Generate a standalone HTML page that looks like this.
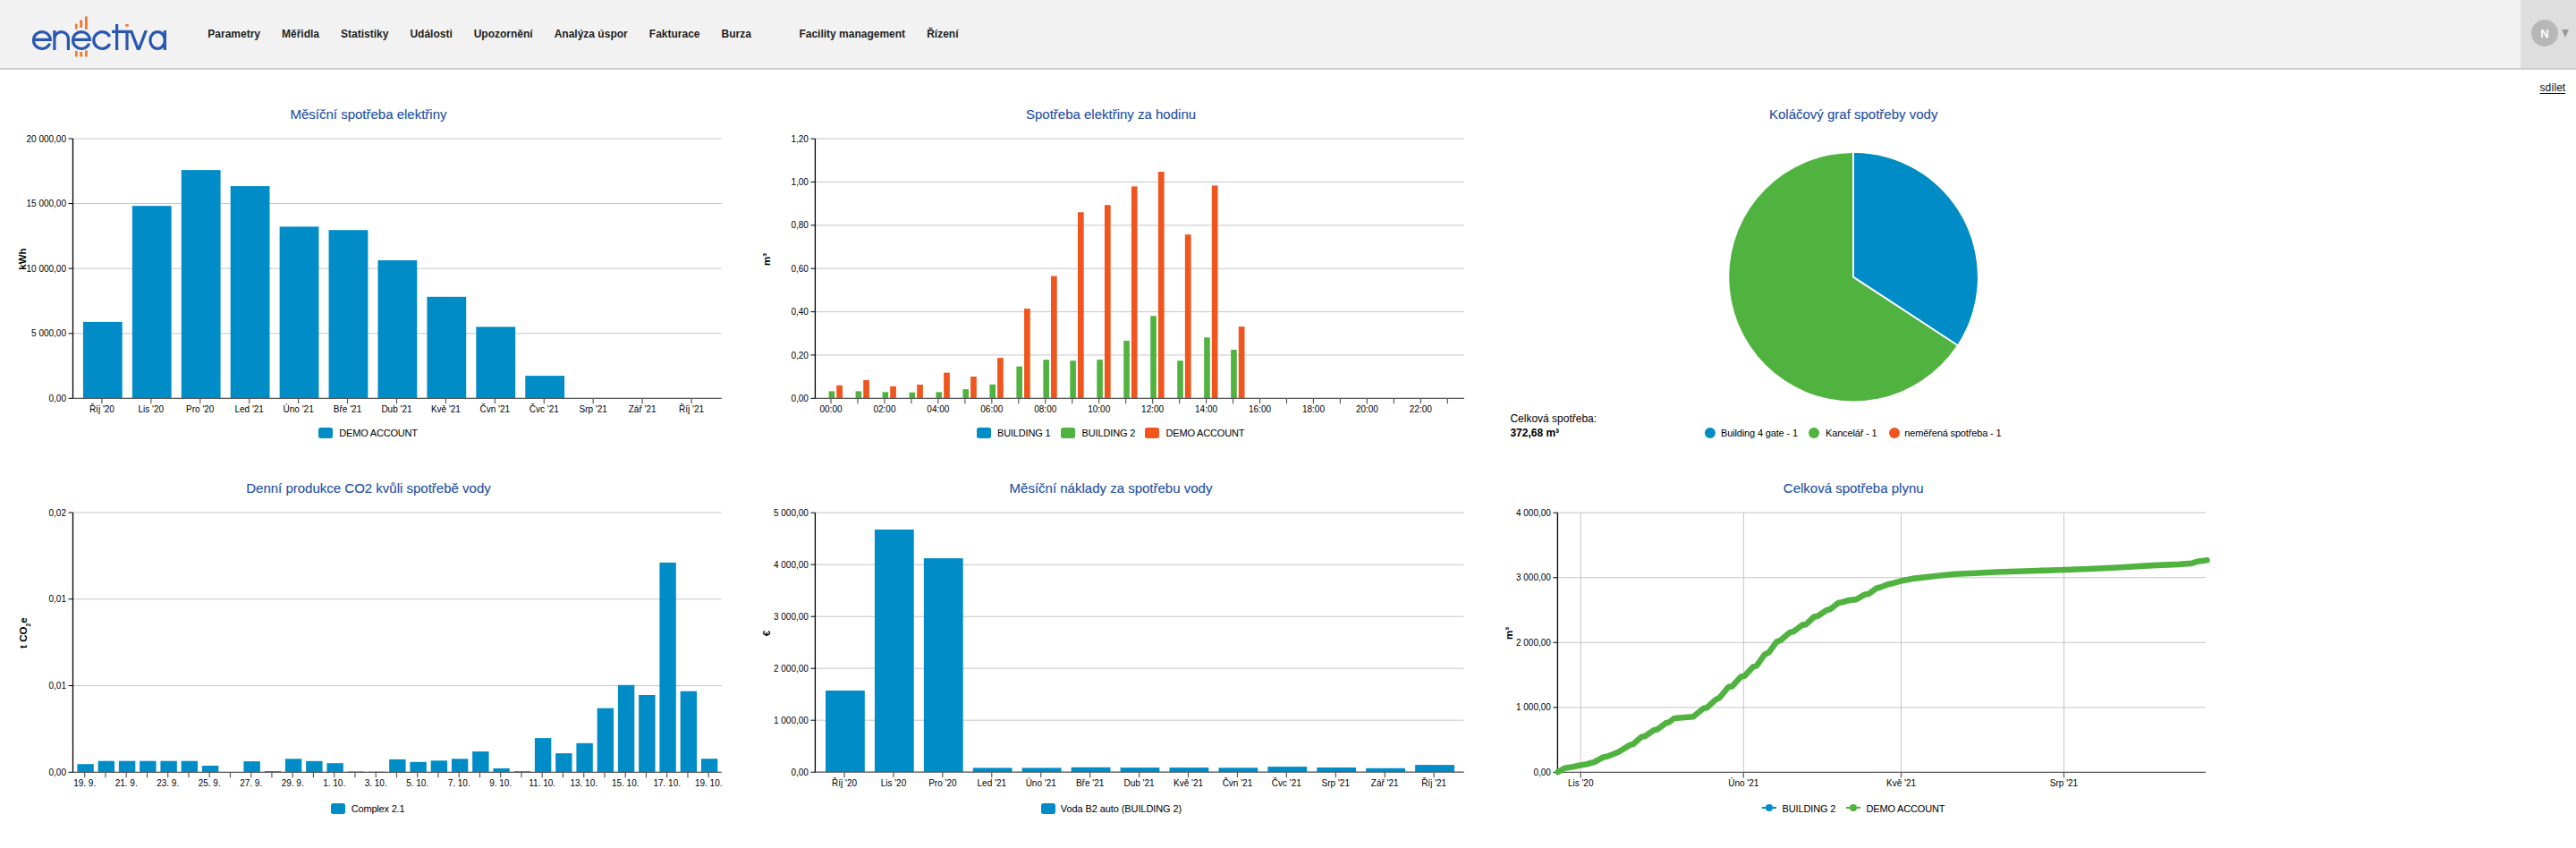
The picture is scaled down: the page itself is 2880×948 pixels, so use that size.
<!DOCTYPE html>
<html><head><meta charset="utf-8"><title>Enectiva</title>
<style>
html,body{margin:0;padding:0;background:#fff;width:2880px;height:948px;overflow:hidden;font-family:"Liberation Sans", sans-serif;}
#hdr{position:absolute;left:0;top:0;width:2880px;height:76px;background:#f2f2f2;border-bottom:2px solid #cecece;}
#usr{position:absolute;left:2818px;top:0;width:62px;height:76px;background:#dedede;}
.nav{position:absolute;top:31px;font-size:12px;font-weight:bold;color:#1e1e1e;white-space:nowrap;line-height:14px;}
#av{position:absolute;left:2830px;top:22px;width:30px;height:30px;border-radius:50%;background:#b7b7b7;color:#fff;font-weight:bold;font-size:13px;line-height:32px;text-align:center;}
#tri{position:absolute;left:2863.5px;top:33px;width:0;height:0;border-left:4.2px solid transparent;border-right:4.2px solid transparent;border-top:9px solid #9a9a9a;}
#share{position:absolute;left:2839.5px;top:91px;font-size:12px;color:#111;text-decoration:underline;text-underline-offset:2px;text-decoration-thickness:1.2px;line-height:14px;}
#charts{position:absolute;left:0;top:0;}
</style></head><body>
<div id="hdr"><svg width="200" height="76" viewBox="0 0 200 76" style="position:absolute;left:0;top:0">
<g fill="none" stroke="#2a58b0" stroke-width="3.2">
<path d="M37.5,44.4 H56.3 A9.4,9.4 0 1 0 55.6,48.6"/>
<path d="M60.9,56 V34 M60.9,56 V43.35 A7.75,7.75 0 0 1 76.4,43.35 V56"/>
<path d="M81.55,44.4 H100.35 A9.4,9.4 0 1 0 99.65,48.6"/>
<path d="M122.7,41 A9.4,9.4 0 1 0 122.7,49"/>
<path d="M130.6,27 V56 M125.1,35.45 H147.7"/>
<path d="M142,35.4 V56"/>
<path d="M176.1,35.6 A8.2,9.4 0 1 0 176.1,54.4 A8.2,9.4 0 1 0 176.1,35.6 M184.4,34 V56"/>
</g>
<polygon fill="#2a58b0" points="144.6,34 148.2,34 154.8,51.8 161.5,34 165.1,34 156.6,56 153,56"/>
<g fill="#f07a32">
<rect x="84" y="26.6" width="2.6" height="6"/>
<rect x="89.2" y="22.4" width="3" height="8.5"/>
<rect x="95" y="18.4" width="2.8" height="14.6"/>
<rect x="84" y="57" width="2.6" height="6.4"/>
<rect x="89.2" y="58" width="3" height="5.4"/>
<rect x="95" y="56.4" width="2.8" height="7"/>
<rect x="140.3" y="27" width="3.4" height="2.8"/>
</g>
</svg><span class="nav" style="left:232.3px">Parametry</span><span class="nav" style="left:315.0px">Měřidla</span><span class="nav" style="left:381.0px">Statistiky</span><span class="nav" style="left:458.4px">Události</span><span class="nav" style="left:529.7px">Upozornění</span><span class="nav" style="left:619.7px">Analýza úspor</span><span class="nav" style="left:725.8px">Fakturace</span><span class="nav" style="left:806.5px">Burza</span><span class="nav" style="left:893.4px">Facility management</span><span class="nav" style="left:1036.2px">Řízení</span><div id="usr"><div></div></div></div>
<div id="av">N</div><div id="tri"></div>
<div id="share">sdílet</div>
<svg id="charts" width="2880" height="948" viewBox="0 0 2880 948" font-family='"Liberation Sans", sans-serif'>
<text x="412" y="133" text-anchor="middle" font-size="15" fill="#1d4fa3" stroke="#1d4fa3" stroke-width="0.12">Měsíční spotřeba elektřiny</text>
<line x1="81.5" y1="445.3" x2="806.7" y2="445.3" stroke="#c6c6c6" stroke-width="1"/>
<line x1="81.5" y1="372.725" x2="806.7" y2="372.725" stroke="#c6c6c6" stroke-width="1"/>
<line x1="81.5" y1="300.15" x2="806.7" y2="300.15" stroke="#c6c6c6" stroke-width="1"/>
<line x1="81.5" y1="227.575" x2="806.7" y2="227.575" stroke="#c6c6c6" stroke-width="1"/>
<line x1="81.5" y1="155.0" x2="806.7" y2="155.0" stroke="#c6c6c6" stroke-width="1"/>
<line x1="76.5" y1="445.3" x2="81.5" y2="445.3" stroke="#000" stroke-width="1"/>
<text x="74.0" y="448.90000000000003" text-anchor="end" font-size="10" fill="#000">0,00</text>
<line x1="76.5" y1="372.725" x2="81.5" y2="372.725" stroke="#000" stroke-width="1"/>
<text x="74.0" y="376.32500000000005" text-anchor="end" font-size="10" fill="#000">5 000,00</text>
<line x1="76.5" y1="300.15" x2="81.5" y2="300.15" stroke="#000" stroke-width="1"/>
<text x="74.0" y="303.75" text-anchor="end" font-size="10" fill="#000">10 000,00</text>
<line x1="76.5" y1="227.575" x2="81.5" y2="227.575" stroke="#000" stroke-width="1"/>
<text x="74.0" y="231.17499999999998" text-anchor="end" font-size="10" fill="#000">15 000,00</text>
<line x1="76.5" y1="155.0" x2="81.5" y2="155.0" stroke="#000" stroke-width="1"/>
<text x="74.0" y="158.6" text-anchor="end" font-size="10" fill="#000">20 000,00</text>
<line x1="81.5" y1="155.0" x2="81.5" y2="445.8" stroke="#000" stroke-width="1.3"/>
<rect x="92.90" y="359.90" width="43.8" height="85.40" fill="#008cc7"/>
<rect x="147.83" y="230.20" width="43.8" height="215.10" fill="#008cc7"/>
<rect x="202.76" y="190.10" width="43.8" height="255.20" fill="#008cc7"/>
<rect x="257.69" y="208.10" width="43.8" height="237.20" fill="#008cc7"/>
<rect x="312.62" y="253.40" width="43.8" height="191.90" fill="#008cc7"/>
<rect x="367.55" y="257.20" width="43.8" height="188.10" fill="#008cc7"/>
<rect x="422.48" y="291.00" width="43.8" height="154.30" fill="#008cc7"/>
<rect x="477.41" y="331.80" width="43.8" height="113.50" fill="#008cc7"/>
<rect x="532.34" y="365.40" width="43.8" height="79.90" fill="#008cc7"/>
<rect x="587.27" y="420.10" width="43.8" height="25.20" fill="#008cc7"/>
<line x1="81.5" y1="445.3" x2="806.7" y2="445.3" stroke="#5a5a5a" stroke-width="1.2"/>
<line x1="113.9" y1="445.3" x2="113.9" y2="451.3" stroke="#5a5a5a" stroke-width="1.2"/>
<line x1="168.83" y1="445.3" x2="168.83" y2="451.3" stroke="#5a5a5a" stroke-width="1.2"/>
<line x1="223.76" y1="445.3" x2="223.76" y2="451.3" stroke="#5a5a5a" stroke-width="1.2"/>
<line x1="278.69" y1="445.3" x2="278.69" y2="451.3" stroke="#5a5a5a" stroke-width="1.2"/>
<line x1="333.62" y1="445.3" x2="333.62" y2="451.3" stroke="#5a5a5a" stroke-width="1.2"/>
<line x1="388.54999999999995" y1="445.3" x2="388.54999999999995" y2="451.3" stroke="#5a5a5a" stroke-width="1.2"/>
<line x1="443.48" y1="445.3" x2="443.48" y2="451.3" stroke="#5a5a5a" stroke-width="1.2"/>
<line x1="498.40999999999997" y1="445.3" x2="498.40999999999997" y2="451.3" stroke="#5a5a5a" stroke-width="1.2"/>
<line x1="553.34" y1="445.3" x2="553.34" y2="451.3" stroke="#5a5a5a" stroke-width="1.2"/>
<line x1="608.27" y1="445.3" x2="608.27" y2="451.3" stroke="#5a5a5a" stroke-width="1.2"/>
<line x1="663.1999999999999" y1="445.3" x2="663.1999999999999" y2="451.3" stroke="#5a5a5a" stroke-width="1.2"/>
<line x1="718.13" y1="445.3" x2="718.13" y2="451.3" stroke="#5a5a5a" stroke-width="1.2"/>
<line x1="773.06" y1="445.3" x2="773.06" y2="451.3" stroke="#5a5a5a" stroke-width="1.2"/>
<text x="113.9" y="461" text-anchor="middle" font-size="10" fill="#000">Říj '20</text>
<text x="168.83" y="461" text-anchor="middle" font-size="10" fill="#000">Lis '20</text>
<text x="223.76" y="461" text-anchor="middle" font-size="10" fill="#000">Pro '20</text>
<text x="278.69" y="461" text-anchor="middle" font-size="10" fill="#000">Led '21</text>
<text x="333.62" y="461" text-anchor="middle" font-size="10" fill="#000">Úno '21</text>
<text x="388.54999999999995" y="461" text-anchor="middle" font-size="10" fill="#000">Bře '21</text>
<text x="443.48" y="461" text-anchor="middle" font-size="10" fill="#000">Dub '21</text>
<text x="498.40999999999997" y="461" text-anchor="middle" font-size="10" fill="#000">Kvě '21</text>
<text x="553.34" y="461" text-anchor="middle" font-size="10" fill="#000">Čvn '21</text>
<text x="608.27" y="461" text-anchor="middle" font-size="10" fill="#000">Čvc '21</text>
<text x="663.1999999999999" y="461" text-anchor="middle" font-size="10" fill="#000">Srp '21</text>
<text x="718.13" y="461" text-anchor="middle" font-size="10" fill="#000">Zář '21</text>
<text x="773.06" y="461" text-anchor="middle" font-size="10" fill="#000">Říj '21</text>
<text transform="translate(29,289.6) rotate(-90)" text-anchor="middle" font-size="11.5" font-weight="bold" fill="#000">kWh</text>
<rect x="356" y="478" width="16" height="12" rx="2.5" fill="#008cc7"/>
<text x="379.3" y="488" font-size="11" textLength="87.8" lengthAdjust="spacing" fill="#000">DEMO ACCOUNT</text>
<text x="1242" y="133" text-anchor="middle" font-size="15" fill="#1d4fa3" stroke="#1d4fa3" stroke-width="0.12">Spotřeba elektřiny za hodinu</text>
<line x1="911.4" y1="445.3" x2="1637.0" y2="445.3" stroke="#c6c6c6" stroke-width="1"/>
<line x1="911.4" y1="396.93333333333334" x2="1637.0" y2="396.93333333333334" stroke="#c6c6c6" stroke-width="1"/>
<line x1="911.4" y1="348.56666666666666" x2="1637.0" y2="348.56666666666666" stroke="#c6c6c6" stroke-width="1"/>
<line x1="911.4" y1="300.2" x2="1637.0" y2="300.2" stroke="#c6c6c6" stroke-width="1"/>
<line x1="911.4" y1="251.8333333333333" x2="1637.0" y2="251.8333333333333" stroke="#c6c6c6" stroke-width="1"/>
<line x1="911.4" y1="203.46666666666664" x2="1637.0" y2="203.46666666666664" stroke="#c6c6c6" stroke-width="1"/>
<line x1="911.4" y1="155.09999999999997" x2="1637.0" y2="155.09999999999997" stroke="#c6c6c6" stroke-width="1"/>
<line x1="906.4" y1="445.3" x2="911.4" y2="445.3" stroke="#000" stroke-width="1"/>
<text x="903.9" y="448.90000000000003" text-anchor="end" font-size="10" fill="#000">0,00</text>
<line x1="906.4" y1="396.93333333333334" x2="911.4" y2="396.93333333333334" stroke="#000" stroke-width="1"/>
<text x="903.9" y="400.53333333333336" text-anchor="end" font-size="10" fill="#000">0,20</text>
<line x1="906.4" y1="348.56666666666666" x2="911.4" y2="348.56666666666666" stroke="#000" stroke-width="1"/>
<text x="903.9" y="352.1666666666667" text-anchor="end" font-size="10" fill="#000">0,40</text>
<line x1="906.4" y1="300.2" x2="911.4" y2="300.2" stroke="#000" stroke-width="1"/>
<text x="903.9" y="303.8" text-anchor="end" font-size="10" fill="#000">0,60</text>
<line x1="906.4" y1="251.8333333333333" x2="911.4" y2="251.8333333333333" stroke="#000" stroke-width="1"/>
<text x="903.9" y="255.43333333333328" text-anchor="end" font-size="10" fill="#000">0,80</text>
<line x1="906.4" y1="203.46666666666664" x2="911.4" y2="203.46666666666664" stroke="#000" stroke-width="1"/>
<text x="903.9" y="207.06666666666663" text-anchor="end" font-size="10" fill="#000">1,00</text>
<line x1="906.4" y1="155.09999999999997" x2="911.4" y2="155.09999999999997" stroke="#000" stroke-width="1"/>
<text x="903.9" y="158.69999999999996" text-anchor="end" font-size="10" fill="#000">1,20</text>
<line x1="911.4" y1="155.1" x2="911.4" y2="445.8" stroke="#000" stroke-width="1.3"/>
<rect x="926.60" y="437.40" width="6.6" height="7.90" fill="#50b33f"/>
<rect x="956.57" y="437.40" width="6.6" height="7.90" fill="#50b33f"/>
<rect x="986.54" y="438.30" width="6.6" height="7.00" fill="#50b33f"/>
<rect x="1016.51" y="438.70" width="6.6" height="6.60" fill="#50b33f"/>
<rect x="1046.48" y="438.30" width="6.6" height="7.00" fill="#50b33f"/>
<rect x="1076.45" y="435.10" width="6.6" height="10.20" fill="#50b33f"/>
<rect x="1106.42" y="429.80" width="6.6" height="15.50" fill="#50b33f"/>
<rect x="1136.39" y="409.60" width="6.6" height="35.70" fill="#50b33f"/>
<rect x="1166.36" y="402.10" width="6.6" height="43.20" fill="#50b33f"/>
<rect x="1196.33" y="403.20" width="6.6" height="42.10" fill="#50b33f"/>
<rect x="1226.30" y="402.10" width="6.6" height="43.20" fill="#50b33f"/>
<rect x="1256.27" y="380.90" width="6.6" height="64.40" fill="#50b33f"/>
<rect x="1286.24" y="353.20" width="6.6" height="92.10" fill="#50b33f"/>
<rect x="1316.21" y="403.20" width="6.6" height="42.10" fill="#50b33f"/>
<rect x="1346.18" y="377.20" width="6.6" height="68.10" fill="#50b33f"/>
<rect x="1376.15" y="391.00" width="6.6" height="54.30" fill="#50b33f"/>
<rect x="935.25" y="430.80" width="6.7" height="14.50" fill="#f0551e"/>
<rect x="965.22" y="424.90" width="6.7" height="20.40" fill="#f0551e"/>
<rect x="995.19" y="431.90" width="6.7" height="13.40" fill="#f0551e"/>
<rect x="1025.16" y="430.00" width="6.7" height="15.30" fill="#f0551e"/>
<rect x="1055.13" y="416.60" width="6.7" height="28.70" fill="#f0551e"/>
<rect x="1085.10" y="421.00" width="6.7" height="24.30" fill="#f0551e"/>
<rect x="1115.07" y="400.10" width="6.7" height="45.20" fill="#f0551e"/>
<rect x="1145.04" y="345.00" width="6.7" height="100.30" fill="#f0551e"/>
<rect x="1175.01" y="308.60" width="6.7" height="136.70" fill="#f0551e"/>
<rect x="1204.98" y="237.30" width="6.7" height="208.00" fill="#f0551e"/>
<rect x="1234.95" y="229.20" width="6.7" height="216.10" fill="#f0551e"/>
<rect x="1264.92" y="208.40" width="6.7" height="236.90" fill="#f0551e"/>
<rect x="1294.89" y="192.00" width="6.7" height="253.30" fill="#f0551e"/>
<rect x="1324.86" y="262.20" width="6.7" height="183.10" fill="#f0551e"/>
<rect x="1354.83" y="207.40" width="6.7" height="237.90" fill="#f0551e"/>
<rect x="1384.80" y="365.10" width="6.7" height="80.20" fill="#f0551e"/>
<line x1="911.4" y1="445.3" x2="1637.0" y2="445.3" stroke="#5a5a5a" stroke-width="1.2"/>
<line x1="929.0" y1="445.3" x2="929.0" y2="451.3" stroke="#5a5a5a" stroke-width="1.2"/>
<line x1="958.97" y1="445.3" x2="958.97" y2="451.3" stroke="#5a5a5a" stroke-width="1.2"/>
<line x1="988.94" y1="445.3" x2="988.94" y2="451.3" stroke="#5a5a5a" stroke-width="1.2"/>
<line x1="1018.91" y1="445.3" x2="1018.91" y2="451.3" stroke="#5a5a5a" stroke-width="1.2"/>
<line x1="1048.88" y1="445.3" x2="1048.88" y2="451.3" stroke="#5a5a5a" stroke-width="1.2"/>
<line x1="1078.85" y1="445.3" x2="1078.85" y2="451.3" stroke="#5a5a5a" stroke-width="1.2"/>
<line x1="1108.82" y1="445.3" x2="1108.82" y2="451.3" stroke="#5a5a5a" stroke-width="1.2"/>
<line x1="1138.79" y1="445.3" x2="1138.79" y2="451.3" stroke="#5a5a5a" stroke-width="1.2"/>
<line x1="1168.76" y1="445.3" x2="1168.76" y2="451.3" stroke="#5a5a5a" stroke-width="1.2"/>
<line x1="1198.73" y1="445.3" x2="1198.73" y2="451.3" stroke="#5a5a5a" stroke-width="1.2"/>
<line x1="1228.7" y1="445.3" x2="1228.7" y2="451.3" stroke="#5a5a5a" stroke-width="1.2"/>
<line x1="1258.67" y1="445.3" x2="1258.67" y2="451.3" stroke="#5a5a5a" stroke-width="1.2"/>
<line x1="1288.6399999999999" y1="445.3" x2="1288.6399999999999" y2="451.3" stroke="#5a5a5a" stroke-width="1.2"/>
<line x1="1318.6100000000001" y1="445.3" x2="1318.6100000000001" y2="451.3" stroke="#5a5a5a" stroke-width="1.2"/>
<line x1="1348.58" y1="445.3" x2="1348.58" y2="451.3" stroke="#5a5a5a" stroke-width="1.2"/>
<line x1="1378.55" y1="445.3" x2="1378.55" y2="451.3" stroke="#5a5a5a" stroke-width="1.2"/>
<line x1="1408.52" y1="445.3" x2="1408.52" y2="451.3" stroke="#5a5a5a" stroke-width="1.2"/>
<line x1="1438.49" y1="445.3" x2="1438.49" y2="451.3" stroke="#5a5a5a" stroke-width="1.2"/>
<line x1="1468.46" y1="445.3" x2="1468.46" y2="451.3" stroke="#5a5a5a" stroke-width="1.2"/>
<line x1="1498.4299999999998" y1="445.3" x2="1498.4299999999998" y2="451.3" stroke="#5a5a5a" stroke-width="1.2"/>
<line x1="1528.4" y1="445.3" x2="1528.4" y2="451.3" stroke="#5a5a5a" stroke-width="1.2"/>
<line x1="1558.37" y1="445.3" x2="1558.37" y2="451.3" stroke="#5a5a5a" stroke-width="1.2"/>
<line x1="1588.34" y1="445.3" x2="1588.34" y2="451.3" stroke="#5a5a5a" stroke-width="1.2"/>
<line x1="1618.31" y1="445.3" x2="1618.31" y2="451.3" stroke="#5a5a5a" stroke-width="1.2"/>
<text x="929.0" y="461" text-anchor="middle" font-size="10" fill="#000">00:00</text>
<text x="988.94" y="461" text-anchor="middle" font-size="10" fill="#000">02:00</text>
<text x="1048.88" y="461" text-anchor="middle" font-size="10" fill="#000">04:00</text>
<text x="1108.82" y="461" text-anchor="middle" font-size="10" fill="#000">06:00</text>
<text x="1168.76" y="461" text-anchor="middle" font-size="10" fill="#000">08:00</text>
<text x="1228.7" y="461" text-anchor="middle" font-size="10" fill="#000">10:00</text>
<text x="1288.6399999999999" y="461" text-anchor="middle" font-size="10" fill="#000">12:00</text>
<text x="1348.58" y="461" text-anchor="middle" font-size="10" fill="#000">14:00</text>
<text x="1408.52" y="461" text-anchor="middle" font-size="10" fill="#000">16:00</text>
<text x="1468.46" y="461" text-anchor="middle" font-size="10" fill="#000">18:00</text>
<text x="1528.4" y="461" text-anchor="middle" font-size="10" fill="#000">20:00</text>
<text x="1588.34" y="461" text-anchor="middle" font-size="10" fill="#000">22:00</text>
<text transform="translate(860.8,290) rotate(-90)" text-anchor="middle" font-size="11.5" font-weight="bold" fill="#000">m³</text>
<rect x="1092" y="478" width="16" height="12" rx="2.5" fill="#008cc7"/>
<text x="1115" y="488" font-size="11" textLength="59.6" lengthAdjust="spacing" fill="#000">BUILDING 1</text>
<rect x="1186" y="478" width="16" height="12" rx="2.5" fill="#50b33f"/>
<text x="1209.6" y="488" font-size="11" textLength="59.8" lengthAdjust="spacing" fill="#000">BUILDING 2</text>
<rect x="1280" y="478" width="16" height="12" rx="2.5" fill="#f0551e"/>
<text x="1303.6" y="488" font-size="11" textLength="87.8" lengthAdjust="spacing" fill="#000">DEMO ACCOUNT</text>
<text x="2072.2" y="133" text-anchor="middle" font-size="15" fill="#1d4fa3" stroke="#1d4fa3" stroke-width="0.12">Koláčový graf spotřeby vody</text>
<circle cx="2072.0" cy="309.7" r="138.8" fill="#50b33f"/>
<path d="M2072.0,309.7 L2072.0,170.89999999999998 A138.8,138.8 0 0 1 2188.14,385.70 Z" fill="#008cc7"/>
<path d="M2072.0,169.89999999999998 L2072.0,309.7 L2188.98,386.25" fill="none" stroke="#fff" stroke-width="2"/>
<text x="1688.4" y="472.1" font-size="12" fill="#000">Celková spotřeba:</text>
<text x="1688.4" y="487.5" font-size="12" font-weight="bold" fill="#000">372,68 m³</text>
<circle cx="1911.9" cy="484" r="6" fill="#008cc7"/>
<text x="1924.1" y="488" font-size="11" textLength="85.9" lengthAdjust="spacing" fill="#000">Building 4 gate - 1</text>
<circle cx="2028.0" cy="484" r="6" fill="#50b33f"/>
<text x="2041.0" y="488" font-size="11" textLength="57.6" lengthAdjust="spacing" fill="#000">Kancelář - 1</text>
<circle cx="2118.0" cy="484" r="6" fill="#f0551e"/>
<text x="2129.3" y="488" font-size="11" textLength="108.3" lengthAdjust="spacing" fill="#000">neměřená spotřeba - 1</text>
<text x="412" y="551" text-anchor="middle" font-size="15" fill="#1d4fa3" stroke="#1d4fa3" stroke-width="0.12">Denní produkce CO2 kvůli spotřebě vody</text>
<line x1="81.5" y1="863.3" x2="806.7" y2="863.3" stroke="#c6c6c6" stroke-width="1"/>
<line x1="81.5" y1="766.5333333333333" x2="806.7" y2="766.5333333333333" stroke="#c6c6c6" stroke-width="1"/>
<line x1="81.5" y1="669.7666666666667" x2="806.7" y2="669.7666666666667" stroke="#c6c6c6" stroke-width="1"/>
<line x1="81.5" y1="573.0" x2="806.7" y2="573.0" stroke="#c6c6c6" stroke-width="1"/>
<line x1="76.5" y1="863.3" x2="81.5" y2="863.3" stroke="#000" stroke-width="1"/>
<text x="74.0" y="866.9" text-anchor="end" font-size="10" fill="#000">0,00</text>
<line x1="76.5" y1="766.5333333333333" x2="81.5" y2="766.5333333333333" stroke="#000" stroke-width="1"/>
<text x="74.0" y="770.1333333333333" text-anchor="end" font-size="10" fill="#000">0,01</text>
<line x1="76.5" y1="669.7666666666667" x2="81.5" y2="669.7666666666667" stroke="#000" stroke-width="1"/>
<text x="74.0" y="673.3666666666667" text-anchor="end" font-size="10" fill="#000">0,01</text>
<line x1="76.5" y1="573.0" x2="81.5" y2="573.0" stroke="#000" stroke-width="1"/>
<text x="74.0" y="576.6" text-anchor="end" font-size="10" fill="#000">0,02</text>
<line x1="81.5" y1="573.0" x2="81.5" y2="863.8" stroke="#000" stroke-width="1.3"/>
<rect x="86.40" y="854.20" width="18.4" height="9.10" fill="#008cc7"/>
<rect x="109.65" y="850.70" width="18.4" height="12.60" fill="#008cc7"/>
<rect x="132.90" y="850.70" width="18.4" height="12.60" fill="#008cc7"/>
<rect x="156.15" y="850.70" width="18.4" height="12.60" fill="#008cc7"/>
<rect x="179.40" y="850.70" width="18.4" height="12.60" fill="#008cc7"/>
<rect x="202.65" y="850.70" width="18.4" height="12.60" fill="#008cc7"/>
<rect x="225.90" y="856.00" width="18.4" height="7.30" fill="#008cc7"/>
<rect x="272.40" y="851.10" width="18.4" height="12.20" fill="#008cc7"/>
<rect x="295.65" y="862.10" width="18.4" height="1.20" fill="#008cc7"/>
<rect x="318.90" y="848.30" width="18.4" height="15.00" fill="#008cc7"/>
<rect x="342.15" y="850.80" width="18.4" height="12.50" fill="#008cc7"/>
<rect x="365.40" y="853.20" width="18.4" height="10.10" fill="#008cc7"/>
<rect x="388.65" y="862.50" width="18.4" height="0.80" fill="#008cc7"/>
<rect x="411.90" y="862.70" width="18.4" height="0.60" fill="#008cc7"/>
<rect x="435.15" y="848.90" width="18.4" height="14.40" fill="#008cc7"/>
<rect x="458.40" y="851.80" width="18.4" height="11.50" fill="#008cc7"/>
<rect x="481.65" y="850.30" width="18.4" height="13.00" fill="#008cc7"/>
<rect x="504.90" y="848.30" width="18.4" height="15.00" fill="#008cc7"/>
<rect x="528.15" y="840.10" width="18.4" height="23.20" fill="#008cc7"/>
<rect x="551.40" y="858.90" width="18.4" height="4.40" fill="#008cc7"/>
<rect x="574.65" y="862.20" width="18.4" height="1.10" fill="#008cc7"/>
<rect x="597.90" y="825.10" width="18.4" height="38.20" fill="#008cc7"/>
<rect x="621.15" y="842.10" width="18.4" height="21.20" fill="#008cc7"/>
<rect x="644.40" y="830.80" width="18.4" height="32.50" fill="#008cc7"/>
<rect x="667.65" y="791.70" width="18.4" height="71.60" fill="#008cc7"/>
<rect x="690.90" y="765.80" width="18.4" height="97.50" fill="#008cc7"/>
<rect x="714.15" y="777.00" width="18.4" height="86.30" fill="#008cc7"/>
<rect x="737.40" y="628.90" width="18.4" height="234.40" fill="#008cc7"/>
<rect x="760.65" y="772.70" width="18.4" height="90.60" fill="#008cc7"/>
<rect x="783.90" y="848.20" width="18.4" height="15.10" fill="#008cc7"/>
<line x1="81.5" y1="863.3" x2="806.7" y2="863.3" stroke="#5a5a5a" stroke-width="1.2"/>
<line x1="94.7" y1="863.3" x2="94.7" y2="869.3" stroke="#5a5a5a" stroke-width="1.2"/>
<line x1="117.95" y1="863.3" x2="117.95" y2="869.3" stroke="#5a5a5a" stroke-width="1.2"/>
<line x1="141.2" y1="863.3" x2="141.2" y2="869.3" stroke="#5a5a5a" stroke-width="1.2"/>
<line x1="164.45" y1="863.3" x2="164.45" y2="869.3" stroke="#5a5a5a" stroke-width="1.2"/>
<line x1="187.7" y1="863.3" x2="187.7" y2="869.3" stroke="#5a5a5a" stroke-width="1.2"/>
<line x1="210.95" y1="863.3" x2="210.95" y2="869.3" stroke="#5a5a5a" stroke-width="1.2"/>
<line x1="234.2" y1="863.3" x2="234.2" y2="869.3" stroke="#5a5a5a" stroke-width="1.2"/>
<line x1="257.45" y1="863.3" x2="257.45" y2="869.3" stroke="#5a5a5a" stroke-width="1.2"/>
<line x1="280.7" y1="863.3" x2="280.7" y2="869.3" stroke="#5a5a5a" stroke-width="1.2"/>
<line x1="303.95" y1="863.3" x2="303.95" y2="869.3" stroke="#5a5a5a" stroke-width="1.2"/>
<line x1="327.2" y1="863.3" x2="327.2" y2="869.3" stroke="#5a5a5a" stroke-width="1.2"/>
<line x1="350.45" y1="863.3" x2="350.45" y2="869.3" stroke="#5a5a5a" stroke-width="1.2"/>
<line x1="373.7" y1="863.3" x2="373.7" y2="869.3" stroke="#5a5a5a" stroke-width="1.2"/>
<line x1="396.95" y1="863.3" x2="396.95" y2="869.3" stroke="#5a5a5a" stroke-width="1.2"/>
<line x1="420.2" y1="863.3" x2="420.2" y2="869.3" stroke="#5a5a5a" stroke-width="1.2"/>
<line x1="443.45" y1="863.3" x2="443.45" y2="869.3" stroke="#5a5a5a" stroke-width="1.2"/>
<line x1="466.7" y1="863.3" x2="466.7" y2="869.3" stroke="#5a5a5a" stroke-width="1.2"/>
<line x1="489.95" y1="863.3" x2="489.95" y2="869.3" stroke="#5a5a5a" stroke-width="1.2"/>
<line x1="513.2" y1="863.3" x2="513.2" y2="869.3" stroke="#5a5a5a" stroke-width="1.2"/>
<line x1="536.45" y1="863.3" x2="536.45" y2="869.3" stroke="#5a5a5a" stroke-width="1.2"/>
<line x1="559.7" y1="863.3" x2="559.7" y2="869.3" stroke="#5a5a5a" stroke-width="1.2"/>
<line x1="582.95" y1="863.3" x2="582.95" y2="869.3" stroke="#5a5a5a" stroke-width="1.2"/>
<line x1="606.2" y1="863.3" x2="606.2" y2="869.3" stroke="#5a5a5a" stroke-width="1.2"/>
<line x1="629.45" y1="863.3" x2="629.45" y2="869.3" stroke="#5a5a5a" stroke-width="1.2"/>
<line x1="652.7" y1="863.3" x2="652.7" y2="869.3" stroke="#5a5a5a" stroke-width="1.2"/>
<line x1="675.95" y1="863.3" x2="675.95" y2="869.3" stroke="#5a5a5a" stroke-width="1.2"/>
<line x1="699.2" y1="863.3" x2="699.2" y2="869.3" stroke="#5a5a5a" stroke-width="1.2"/>
<line x1="722.45" y1="863.3" x2="722.45" y2="869.3" stroke="#5a5a5a" stroke-width="1.2"/>
<line x1="745.7" y1="863.3" x2="745.7" y2="869.3" stroke="#5a5a5a" stroke-width="1.2"/>
<line x1="768.95" y1="863.3" x2="768.95" y2="869.3" stroke="#5a5a5a" stroke-width="1.2"/>
<line x1="792.2" y1="863.3" x2="792.2" y2="869.3" stroke="#5a5a5a" stroke-width="1.2"/>
<text x="94.7" y="878.7" text-anchor="middle" font-size="10" fill="#000">19. 9.</text>
<text x="141.2" y="878.7" text-anchor="middle" font-size="10" fill="#000">21. 9.</text>
<text x="187.7" y="878.7" text-anchor="middle" font-size="10" fill="#000">23. 9.</text>
<text x="234.2" y="878.7" text-anchor="middle" font-size="10" fill="#000">25. 9.</text>
<text x="280.7" y="878.7" text-anchor="middle" font-size="10" fill="#000">27. 9.</text>
<text x="327.2" y="878.7" text-anchor="middle" font-size="10" fill="#000">29. 9.</text>
<text x="373.7" y="878.7" text-anchor="middle" font-size="10" fill="#000">1. 10.</text>
<text x="420.2" y="878.7" text-anchor="middle" font-size="10" fill="#000">3. 10.</text>
<text x="466.7" y="878.7" text-anchor="middle" font-size="10" fill="#000">5. 10.</text>
<text x="513.2" y="878.7" text-anchor="middle" font-size="10" fill="#000">7. 10.</text>
<text x="559.7" y="878.7" text-anchor="middle" font-size="10" fill="#000">9. 10.</text>
<text x="606.2" y="878.7" text-anchor="middle" font-size="10" fill="#000">11. 10.</text>
<text x="652.7" y="878.7" text-anchor="middle" font-size="10" fill="#000">13. 10.</text>
<text x="699.2" y="878.7" text-anchor="middle" font-size="10" fill="#000">15. 10.</text>
<text x="745.7" y="878.7" text-anchor="middle" font-size="10" fill="#000">17. 10.</text>
<text x="792.2" y="878.7" text-anchor="middle" font-size="10" fill="#000">19. 10.</text>
<text transform="translate(29.6,707.6) rotate(-90)" text-anchor="middle" font-size="11.5" font-weight="bold" fill="#000">t CO<tspan font-size="7" dy="4">2</tspan><tspan dy="-4">e</tspan></text>
<rect x="370" y="898" width="16" height="12" rx="2.5" fill="#008cc7"/>
<text x="392.8" y="908" font-size="11" textLength="59.8" lengthAdjust="spacing" fill="#000">Complex 2.1</text>
<text x="1242" y="551" text-anchor="middle" font-size="15" fill="#1d4fa3" stroke="#1d4fa3" stroke-width="0.12">Měsíční náklady za spotřebu vody</text>
<line x1="911.4" y1="863.2" x2="1636.7" y2="863.2" stroke="#c6c6c6" stroke-width="1"/>
<line x1="911.4" y1="805.2" x2="1636.7" y2="805.2" stroke="#c6c6c6" stroke-width="1"/>
<line x1="911.4" y1="747.2" x2="1636.7" y2="747.2" stroke="#c6c6c6" stroke-width="1"/>
<line x1="911.4" y1="689.2" x2="1636.7" y2="689.2" stroke="#c6c6c6" stroke-width="1"/>
<line x1="911.4" y1="631.2" x2="1636.7" y2="631.2" stroke="#c6c6c6" stroke-width="1"/>
<line x1="911.4" y1="573.2" x2="1636.7" y2="573.2" stroke="#c6c6c6" stroke-width="1"/>
<line x1="906.4" y1="863.2" x2="911.4" y2="863.2" stroke="#000" stroke-width="1"/>
<text x="903.9" y="866.8000000000001" text-anchor="end" font-size="10" fill="#000">0,00</text>
<line x1="906.4" y1="805.2" x2="911.4" y2="805.2" stroke="#000" stroke-width="1"/>
<text x="903.9" y="808.8000000000001" text-anchor="end" font-size="10" fill="#000">1 000,00</text>
<line x1="906.4" y1="747.2" x2="911.4" y2="747.2" stroke="#000" stroke-width="1"/>
<text x="903.9" y="750.8000000000001" text-anchor="end" font-size="10" fill="#000">2 000,00</text>
<line x1="906.4" y1="689.2" x2="911.4" y2="689.2" stroke="#000" stroke-width="1"/>
<text x="903.9" y="692.8000000000001" text-anchor="end" font-size="10" fill="#000">3 000,00</text>
<line x1="906.4" y1="631.2" x2="911.4" y2="631.2" stroke="#000" stroke-width="1"/>
<text x="903.9" y="634.8000000000001" text-anchor="end" font-size="10" fill="#000">4 000,00</text>
<line x1="906.4" y1="573.2" x2="911.4" y2="573.2" stroke="#000" stroke-width="1"/>
<text x="903.9" y="576.8000000000001" text-anchor="end" font-size="10" fill="#000">5 000,00</text>
<line x1="911.4" y1="573.2" x2="911.4" y2="863.7" stroke="#000" stroke-width="1.3"/>
<rect x="923.00" y="772.00" width="43.8" height="91.20" fill="#008cc7"/>
<rect x="977.93" y="592.00" width="43.8" height="271.20" fill="#008cc7"/>
<rect x="1032.86" y="624.10" width="43.8" height="239.10" fill="#008cc7"/>
<rect x="1087.79" y="858.40" width="43.8" height="4.80" fill="#008cc7"/>
<rect x="1142.72" y="858.40" width="43.8" height="4.80" fill="#008cc7"/>
<rect x="1197.65" y="857.80" width="43.8" height="5.40" fill="#008cc7"/>
<rect x="1252.58" y="858.10" width="43.8" height="5.10" fill="#008cc7"/>
<rect x="1307.51" y="858.10" width="43.8" height="5.10" fill="#008cc7"/>
<rect x="1362.44" y="858.30" width="43.8" height="4.90" fill="#008cc7"/>
<rect x="1417.37" y="857.10" width="43.8" height="6.10" fill="#008cc7"/>
<rect x="1472.30" y="858.00" width="43.8" height="5.20" fill="#008cc7"/>
<rect x="1527.23" y="858.80" width="43.8" height="4.40" fill="#008cc7"/>
<rect x="1582.16" y="855.10" width="43.8" height="8.10" fill="#008cc7"/>
<line x1="911.4" y1="863.2" x2="1636.7" y2="863.2" stroke="#5a5a5a" stroke-width="1.2"/>
<line x1="944.0" y1="863.2" x2="944.0" y2="869.2" stroke="#5a5a5a" stroke-width="1.2"/>
<line x1="998.93" y1="863.2" x2="998.93" y2="869.2" stroke="#5a5a5a" stroke-width="1.2"/>
<line x1="1053.86" y1="863.2" x2="1053.86" y2="869.2" stroke="#5a5a5a" stroke-width="1.2"/>
<line x1="1108.79" y1="863.2" x2="1108.79" y2="869.2" stroke="#5a5a5a" stroke-width="1.2"/>
<line x1="1163.72" y1="863.2" x2="1163.72" y2="869.2" stroke="#5a5a5a" stroke-width="1.2"/>
<line x1="1218.65" y1="863.2" x2="1218.65" y2="869.2" stroke="#5a5a5a" stroke-width="1.2"/>
<line x1="1273.58" y1="863.2" x2="1273.58" y2="869.2" stroke="#5a5a5a" stroke-width="1.2"/>
<line x1="1328.51" y1="863.2" x2="1328.51" y2="869.2" stroke="#5a5a5a" stroke-width="1.2"/>
<line x1="1383.44" y1="863.2" x2="1383.44" y2="869.2" stroke="#5a5a5a" stroke-width="1.2"/>
<line x1="1438.37" y1="863.2" x2="1438.37" y2="869.2" stroke="#5a5a5a" stroke-width="1.2"/>
<line x1="1493.3" y1="863.2" x2="1493.3" y2="869.2" stroke="#5a5a5a" stroke-width="1.2"/>
<line x1="1548.23" y1="863.2" x2="1548.23" y2="869.2" stroke="#5a5a5a" stroke-width="1.2"/>
<line x1="1603.1599999999999" y1="863.2" x2="1603.1599999999999" y2="869.2" stroke="#5a5a5a" stroke-width="1.2"/>
<text x="944.0" y="878.7" text-anchor="middle" font-size="10" fill="#000">Říj '20</text>
<text x="998.93" y="878.7" text-anchor="middle" font-size="10" fill="#000">Lis '20</text>
<text x="1053.86" y="878.7" text-anchor="middle" font-size="10" fill="#000">Pro '20</text>
<text x="1108.79" y="878.7" text-anchor="middle" font-size="10" fill="#000">Led '21</text>
<text x="1163.72" y="878.7" text-anchor="middle" font-size="10" fill="#000">Úno '21</text>
<text x="1218.65" y="878.7" text-anchor="middle" font-size="10" fill="#000">Bře '21</text>
<text x="1273.58" y="878.7" text-anchor="middle" font-size="10" fill="#000">Dub '21</text>
<text x="1328.51" y="878.7" text-anchor="middle" font-size="10" fill="#000">Kvě '21</text>
<text x="1383.44" y="878.7" text-anchor="middle" font-size="10" fill="#000">Čvn '21</text>
<text x="1438.37" y="878.7" text-anchor="middle" font-size="10" fill="#000">Čvc '21</text>
<text x="1493.3" y="878.7" text-anchor="middle" font-size="10" fill="#000">Srp '21</text>
<text x="1548.23" y="878.7" text-anchor="middle" font-size="10" fill="#000">Zář '21</text>
<text x="1603.1599999999999" y="878.7" text-anchor="middle" font-size="10" fill="#000">Říj '21</text>
<text transform="translate(860.5,708) rotate(-90)" text-anchor="middle" font-size="11.5" font-weight="bold" fill="#000">€</text>
<rect x="1164" y="898" width="16" height="12" rx="2.5" fill="#008cc7"/>
<text x="1185.8" y="908" font-size="11" textLength="135.4" lengthAdjust="spacing" fill="#000">Voda B2 auto (BUILDING 2)</text>
<text x="2072.2" y="551" text-anchor="middle" font-size="15" fill="#1d4fa3" stroke="#1d4fa3" stroke-width="0.12">Celková spotřeba plynu</text>
<line x1="1767.2" y1="573.2" x2="1767.2" y2="863.4" stroke="#c6c6c6" stroke-width="1"/>
<line x1="1949.3" y1="573.2" x2="1949.3" y2="863.4" stroke="#c6c6c6" stroke-width="1"/>
<line x1="2125.5" y1="573.2" x2="2125.5" y2="863.4" stroke="#c6c6c6" stroke-width="1"/>
<line x1="2307.5" y1="573.2" x2="2307.5" y2="863.4" stroke="#c6c6c6" stroke-width="1"/>
<line x1="1741.4" y1="863.4" x2="2466.0" y2="863.4" stroke="#c6c6c6" stroke-width="1"/>
<line x1="1741.4" y1="790.85" x2="2466.0" y2="790.85" stroke="#c6c6c6" stroke-width="1"/>
<line x1="1741.4" y1="718.3" x2="2466.0" y2="718.3" stroke="#c6c6c6" stroke-width="1"/>
<line x1="1741.4" y1="645.75" x2="2466.0" y2="645.75" stroke="#c6c6c6" stroke-width="1"/>
<line x1="1741.4" y1="573.2" x2="2466.0" y2="573.2" stroke="#c6c6c6" stroke-width="1"/>
<line x1="1736.4" y1="863.4" x2="1741.4" y2="863.4" stroke="#000" stroke-width="1"/>
<text x="1733.9" y="867.0" text-anchor="end" font-size="10" fill="#000">0,00</text>
<line x1="1736.4" y1="790.85" x2="1741.4" y2="790.85" stroke="#000" stroke-width="1"/>
<text x="1733.9" y="794.45" text-anchor="end" font-size="10" fill="#000">1 000,00</text>
<line x1="1736.4" y1="718.3" x2="1741.4" y2="718.3" stroke="#000" stroke-width="1"/>
<text x="1733.9" y="721.9" text-anchor="end" font-size="10" fill="#000">2 000,00</text>
<line x1="1736.4" y1="645.75" x2="1741.4" y2="645.75" stroke="#000" stroke-width="1"/>
<text x="1733.9" y="649.35" text-anchor="end" font-size="10" fill="#000">3 000,00</text>
<line x1="1736.4" y1="573.2" x2="1741.4" y2="573.2" stroke="#000" stroke-width="1"/>
<text x="1733.9" y="576.8000000000001" text-anchor="end" font-size="10" fill="#000">4 000,00</text>
<line x1="1741.4" y1="573.2" x2="1741.4" y2="863.9" stroke="#000" stroke-width="1.3"/>
<line x1="1741.4" y1="863.4" x2="2466.0" y2="863.4" stroke="#5a5a5a" stroke-width="1.2"/>
<line x1="1767.2" y1="863.4" x2="1767.2" y2="869.4" stroke="#5a5a5a" stroke-width="1.2"/>
<line x1="1949.3" y1="863.4" x2="1949.3" y2="869.4" stroke="#5a5a5a" stroke-width="1.2"/>
<line x1="2125.5" y1="863.4" x2="2125.5" y2="869.4" stroke="#5a5a5a" stroke-width="1.2"/>
<line x1="2307.5" y1="863.4" x2="2307.5" y2="869.4" stroke="#5a5a5a" stroke-width="1.2"/>
<text x="1767.2" y="878.8" text-anchor="middle" font-size="10" fill="#000">Lis '20</text>
<text x="1949.3" y="878.8" text-anchor="middle" font-size="10" fill="#000">Úno '21</text>
<text x="2125.5" y="878.8" text-anchor="middle" font-size="10" fill="#000">Kvě '21</text>
<text x="2307.5" y="878.8" text-anchor="middle" font-size="10" fill="#000">Srp '21</text>
<polyline points="1741.5,863.2 1749.2,858.8 1758.6,857.3 1766.8,855.5 1773.9,854.3 1782.2,852 1792.8,846.4 1797.5,845.5 1809.3,840.8 1822.3,832.9 1825.8,831.9 1835.2,823.7 1838.8,823.3 1849.4,816 1852.9,815.4 1862.4,808.3 1865.9,807.5 1871.8,803 1893,801.3 1904.8,791.8 1908.4,791.2 1917.8,782.4 1922.5,780 1932.4,768 1936.6,767.2 1946.5,756.4 1950.6,755.6 1959.7,745.7 1963.8,744.4 1972.9,731.7 1977.8,729.2 1986.1,717.6 1991.1,715.6 2001,706.9 2005.1,706.1 2015,698.6 2019.1,698.1 2028.2,689.5 2032.3,688.7 2042.3,682.1 2046.4,681 2055.5,673.9 2060.4,673 2067,671 2075.3,670.1 2084.4,664.8 2089.3,663.9 2097.6,657.8 2102.5,656.5 2111.6,652.9 2116.6,651.9 2125.1,649.6 2138.3,646.9 2161.6,644.2 2184.9,641.8 2208.2,640.7 2231.5,639.5 2254.8,638.7 2278,638 2301.3,637.2 2335.4,636 2370.8,634.2 2406.1,632.1 2435.6,630.9 2450.9,629.7 2456.8,627.7 2467.5,626.2" fill="none" stroke="#50b33f" stroke-width="6.6" stroke-linejoin="round" stroke-linecap="round"/>
<text transform="translate(1690.8,708) rotate(-90)" text-anchor="middle" font-size="11.5" font-weight="bold" fill="#000">m³</text>
<line x1="1970" y1="903" x2="1986" y2="903" stroke="#008cc7" stroke-width="2"/>
<circle cx="1978" cy="903" r="4" fill="#008cc7"/>
<text x="1992.6" y="907.8" font-size="11" textLength="59.8" lengthAdjust="spacing" fill="#000">BUILDING 2</text>
<line x1="2064" y1="903" x2="2080" y2="903" stroke="#50b33f" stroke-width="2"/>
<circle cx="2072" cy="903" r="4" fill="#50b33f"/>
<text x="2086.6" y="907.8" font-size="11" textLength="87.8" lengthAdjust="spacing" fill="#000">DEMO ACCOUNT</text>
</svg>
</body></html>
